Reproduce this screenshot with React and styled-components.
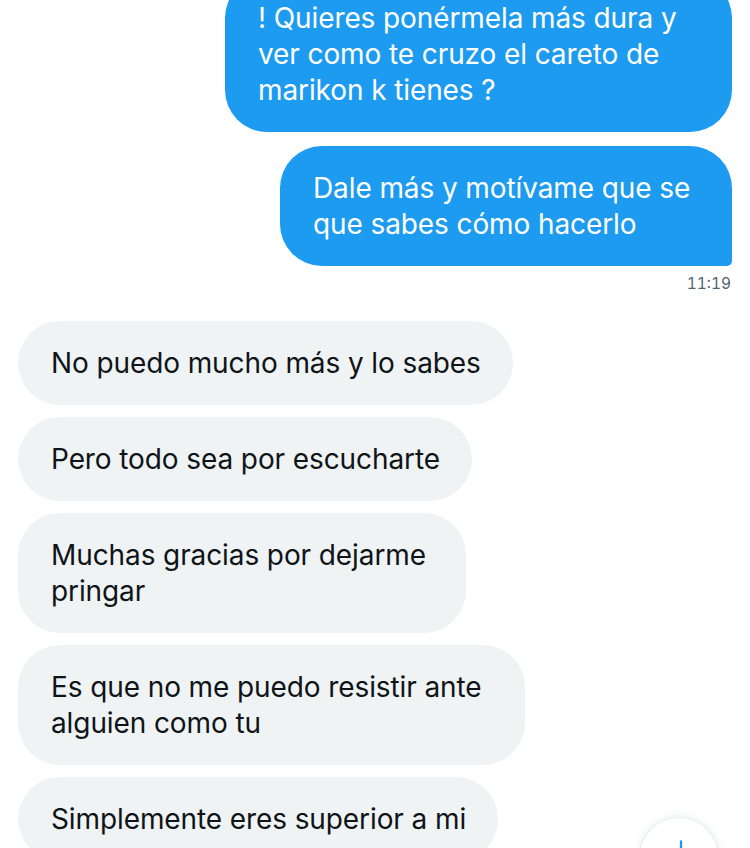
import React from 'react'
import styled, { createGlobalStyle } from 'styled-components'

const Global = createGlobalStyle`
  html, body {
    margin: 0;
    padding: 0;
    background: #fff;
    overflow: hidden;
  }
  body {
    font-family: Inter, "Noto Sans", sans-serif;
    -webkit-font-smoothing: antialiased;
  }
`

const Screen = styled.div`
  position: relative;
  width: 750px;
  height: 848px;
  overflow: hidden;
`

const Thread = styled.div`
  display: flex;
  flex-direction: column;
  padding: 0 18px 0 18px;
  margin-top: -24px;
`

const Group = styled.div`
  display: flex;
  flex-direction: column;
  align-items: ${props => (props.mine ? 'flex-end' : 'flex-start')};
  gap: ${props => (props.mine ? '14px' : '12px')};
`

const Bubble = styled.div`
  box-sizing: border-box;
  ${props => props.width && `width: ${props.width}px;`}
  padding: 24px 32px 24px 33px;
  border-radius: 42px;
  ${props => props.tail && 'border-bottom-right-radius: 5px;'}
  background: ${props => (props.mine ? '#1d9bf0' : '#eff3f4')};
  color: ${props => (props.mine ? '#ffffff' : '#0f1419')};
  font-size: 28px;
  line-height: 36px;
  letter-spacing: -0.1px;
  white-space: nowrap;
`

const Time = styled.div`
  align-self: flex-end;
  margin: 8px 1px 27px 0;
  font-size: 15.5px;
  line-height: 20px;
  font-variant-numeric: tabular-nums;
  color: #536471;
`

const ScrollButton = styled.div`
  position: absolute;
  left: 640px;
  top: 818px;
  width: 78px;
  height: 78px;
  border-radius: 50%;
  background: #fff;
  box-shadow: 0 0 8px rgba(101, 119, 134, 0.2), 0 1px 3px rgba(101, 119, 134, 0.15);
  display: flex;
  justify-content: center;
  padding-top: 20px;
  padding-left: 4px;
  box-sizing: border-box;
`

const ArrowDown = () => (
  <svg width="28" height="28" viewBox="0 0 24 24" fill="none">
    <path d="M12 3v17M5 13l7 7 7-7" stroke="#1d9bf0" strokeWidth="2" strokeLinecap="round" strokeLinejoin="round" />
  </svg>
)

const sent = [
  { lines: ['! Quieres ponérmela más dura y', 'ver como te cruzo el careto de', 'marikon k tienes ?'], width: 507 },
  { lines: ['Dale más y motívame que se', 'que sabes cómo hacerlo'], width: 452, tail: true },
]

const received = [
  { lines: ['No puedo mucho más y lo sabes'] },
  { lines: ['Pero todo sea por escucharte'] },
  { lines: ['Muchas gracias por dejarme', 'pringar'], width: 448 },
  { lines: ['Es que no me puedo resistir ante', 'alguien como tu'], width: 507 },
  { lines: ['Simplemente eres superior a mi'] },
]

const Lines = ({ lines }) =>
  lines.map((l, i) => (
    <React.Fragment key={i}>
      {i > 0 && <br />}
      {l}
    </React.Fragment>
  ))

export default function App() {
  return (
    <Screen>
      <Global />
      <Thread>
        <Group mine>
          {sent.map((m, i) => (
            <Bubble mine key={i} width={m.width} tail={m.tail}>
              <Lines lines={m.lines} />
            </Bubble>
          ))}
        </Group>
        <Time>11:19</Time>
        <Group>
          {received.map((m, i) => (
            <Bubble key={i} width={m.width}>
              <Lines lines={m.lines} />
            </Bubble>
          ))}
        </Group>
      </Thread>
      <ScrollButton>
        <ArrowDown />
      </ScrollButton>
    </Screen>
  )
}
